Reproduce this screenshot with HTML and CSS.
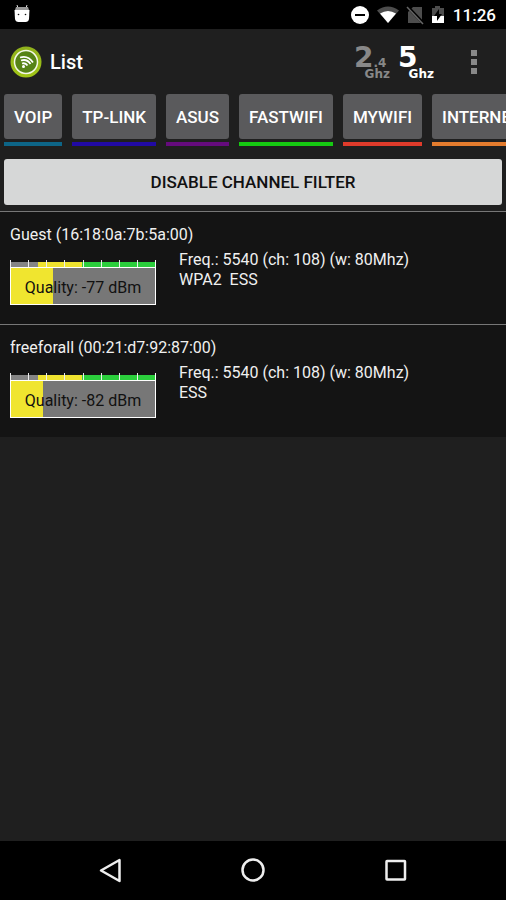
FILE: index.html
```html
<!DOCTYPE html>
<html lang="en">
<head>
<meta charset="utf-8">
<meta name="viewport" content="width=device-width, initial-scale=1">
<title>List</title>
<link rel="stylesheet" href="styles.css">
</head>
<body>
<div class="statusbar">
  <svg class="droid" width="20" height="22" viewBox="0 0 20 22" aria-hidden="true">
    <path d="M5 2l1 3M15 2l-1 3" stroke="#ddd" stroke-width="1"/>
    <path d="M4 4h12l1 3H3z" fill="#999"/>
    <path d="M2.500 7h15l-.5 9q-.5 3-3.500 3h-7q-3 0-3.500-3z" fill="#fff"/>
    <circle cx="6.500" cy="11.500" r=".8" fill="#111"/><circle cx="13.500" cy="11.500" r=".8" fill="#111"/>
  </svg>
  <div class="status-icons">
    <svg width="20" height="20" viewBox="0 0 20 20" aria-hidden="true"><circle cx="10" cy="10" r="9" fill="#fff"/><path d="M5 10h10" stroke="#000" stroke-width="2"/></svg>
    <svg width="22" height="20" viewBox="0 0 22 20" aria-hidden="true"><path d="M0 5.500Q11-2.500 22 5.500L11 18z" fill="#4d4d4d"/><path d="M3 8.500Q11 3.500 19 8.500L11 18z" fill="#fff"/></svg>
    <svg width="18" height="20" viewBox="0 0 18 20" aria-hidden="true"><path d="M7 2h9v16H2V7z" fill="#4d4d4d"/><path d="M1 1l17 18" stroke="#000" stroke-width="3"/><path d="M1 2l16 17" stroke="#666" stroke-width="1.500"/></svg>
    <svg width="14" height="20" viewBox="0 0 14 20" aria-hidden="true"><path d="M4 1h5v2h4v8H1V3h3z" fill="#4d4d4d"/><path d="M1 11h12v7H1z" fill="#fff"/><path d="M8 4l-5 7h3v5l5-7H8z" fill="#000"/></svg>
  </div>
  <time class="clock">11:26</time>
</div>
<header class="appbar">
  <svg width="32" height="32" viewBox="0 0 32 32" aria-hidden="true">
    <defs><linearGradient id="lime" x1="0" y1="0" x2="0" y2="1"><stop offset="0" stop-color="#8fb01c"/><stop offset="1" stop-color="#a0c515"/></linearGradient></defs>
    <circle cx="16" cy="16" r="15.500" fill="url(#lime)"/>
    <circle cx="16" cy="16" r="11.500" fill="#568316" stroke="#f4f8e8" stroke-width="1.500"/>
    <g fill="none" stroke="#fff" stroke-width="1.800"><path d="M10 11.500Q18 9 23 16.500"/><path d="M11 14.500Q17 12.500 20.500 18"/><path d="M12 17.500Q15.500 16.500 17.500 19.500"/></g>
    <circle cx="13.500" cy="20.500" r="1.500" fill="#fff"/>
  </svg>
  <h1 class="title">List</h1>
  <button class="band" type="button"><span class="band-num">2<small>.4</small></span><span class="band-unit">Ghz</span></button>
  <button class="band band-on" type="button"><span class="band-num">5</span><span class="band-unit">Ghz</span></button>
  <button class="more" type="button" aria-label="More options"><i></i><i></i><i></i></button>
</header>
<nav class="tabs">
  <button class="tab teal" type="button"><span>VOIP</span></button>
  <button class="tab blue" type="button"><span>TP-LINK</span></button>
  <button class="tab purple" type="button"><span>ASUS</span></button>
  <button class="tab green" type="button"><span>FASTWIFI</span></button>
  <button class="tab red" type="button"><span>MYWIFI</span></button>
  <button class="tab orange" type="button"><span>INTERNET</span></button>
</nav>
<div class="filter"><button class="filter-button" type="button">DISABLE CHANNEL FILTER</button></div>
<main class="content">
  <ul class="networks">
    <li class="network">
      <h2 class="name">Guest (16:18:0a:7b:5a:00)</h2>
      <div class="details">
        <div class="signal">
          <div class="scale"><i></i><i></i><i></i><i></i><i></i><i></i><i></i><i></i></div>
          <div class="meter"><div class="fill" style="width:29%"></div><span class="quality">Quality: -77 dBm</span></div>
        </div>
        <div class="info">Freq.: 5540 (ch: 108) (w: 80Mhz)<br>WPA2&nbsp; ESS</div>
      </div>
    </li>
    <li class="network">
      <h2 class="name">freeforall (00:21:d7:92:87:00)</h2>
      <div class="details">
        <div class="signal">
          <div class="scale"><i></i><i></i><i></i><i></i><i></i><i></i><i></i><i></i></div>
          <div class="meter"><div class="fill" style="width:22.5%"></div><span class="quality">Quality: -82 dBm</span></div>
        </div>
        <div class="info">Freq.: 5540 (ch: 108) (w: 80Mhz)<br>ESS</div>
      </div>
    </li>
  </ul>
</main>
<footer class="navbar">
  <button type="button" aria-label="Back"><svg width="26" height="26" viewBox="0 0 26 26"><path d="M4 13.500L22.500 3v21z"/></svg></button>
  <button type="button" aria-label="Home"><svg width="26" height="26" viewBox="0 0 26 26"><circle cx="13" cy="13" r="10.500"/></svg></button>
  <button type="button" aria-label="Recent apps"><svg width="26" height="26" viewBox="0 0 26 26"><rect x="3.500" y="4" width="18.500" height="18.500" rx=".5"/></svg></button>
</footer>
</body>
</html>
```
FILE: styles.css
```css
* { box-sizing: border-box; }
body {
  margin: 0;
  min-height: 100vh;
  display: flex;
  flex-direction: column;
  overflow-x: hidden;
  background: #1f1f1f;
  color: #f0f0f0;
  font-family: Roboto, "Liberation Sans", sans-serif;
}
button { border: 0; padding: 0; background: none; color: inherit; font: inherit; }
svg { display: block; }
.statusbar {
  display: flex;
  align-items: center;
  height: 29px;
  padding: 0 10px 0 12px;
  background: #000;
}
.droid { margin-bottom: 2px; }
.status-icons { display: flex; gap: 7px; margin-left: auto; }
.clock { margin-left: 8px; font-size: 17px; font-weight: 500; color: #fff; }
.appbar {
  display: flex;
  align-items: center;
  height: 65px;
  padding: 0 16px 0 10px;
}
.title { flex: 1; margin: 0 0 0 8px; font-size: 20px; font-weight: 500; color: #fff; }
.band {
  display: flex;
  flex-direction: column;
  width: 36px;
  padding-top: 2px;
  margin-right: 8px;
  font-family: "DejaVu Sans", sans-serif;
  font-weight: 700;
  text-align: left;
  color: #888;
}
.band-on { color: #fff; }
.band-num { font-size: 28px; line-height: 24px; white-space: nowrap; }
.band-num small { font-size: 12px; line-height: 1px; }
.band-unit { align-self: flex-end; margin-top: -2px; font-size: 12px; line-height: 12px; }
.more { display: flex; flex-direction: column; gap: 3px; align-items: center; width: 32px; margin-left: 16px; }
.more i { width: 6px; height: 6px; background: #888; }
.tabs { display: flex; gap: 10px; padding-left: 4px; overflow: hidden; }
.tab {
  flex: none;
  padding-bottom: 3px;
  border-bottom: 4px solid;
  font-size: 17px;
  font-weight: 500;
}
.tab span {
  display: block;
  padding: 1px 10px 0;
  border-radius: 3px;
  background: #5a5a5c;
  color: #fff;
  line-height: 44px;
}
.teal { border-color: #0d6587; }
.blue { border-color: #210aa5; }
.purple { border-color: #650b7d; }
.green { border-color: #16c912; }
.red { border-color: #df3b2b; }
.orange { border-color: #e47c2e; }
.filter { padding: 13px 4px 6px; }
.filter-button {
  width: 100%;
  height: 46px;
  border-radius: 3px;
  background: #d6d7d7;
  color: #111;
  font-size: 17px;
  font-weight: 500;
}
.content { flex: 1; }
.networks { margin: 0; padding: 0; list-style: none; }
.network {
  height: 113px;
  padding: 11px 10px 0;
  border-top: 1px solid #777;
  background: #141414;
}
.name { margin: 0; font-size: 16px; font-weight: 400; line-height: 24px; }
.details { display: flex; gap: 23px; }
.signal { width: 146px; padding-top: 13px; }
.scale {
  display: flex;
  height: 7px;
  border-right: 1px solid #fff;
  background: linear-gradient(90deg, #858585 19%, #efe32f 19% 50%, #2bce3c 50%) 0 2px no-repeat;
}
.scale i { flex: 1; border-left: 1px solid #eee; }
.meter {
  display: grid;
  grid-template-rows: 36px;
  border: 1px solid #fff;
  background: #777;
}
.fill, .quality { grid-area: 1 / 1; }
.fill { background: #f0e52f; }
.quality { padding-top: 2px; color: #111; font-size: 16px; line-height: 36px; text-align: center; }
.info { padding-top: 3px; font-size: 16px; line-height: 20px; }
.navbar {
  display: flex;
  justify-content: center;
  align-items: center;
  gap: 117px;
  height: 59px;
  padding-bottom: 2px;
  background: #000;
}
.navbar svg { fill: none; stroke: #eee; stroke-width: 2.5; stroke-linejoin: round; }
```
